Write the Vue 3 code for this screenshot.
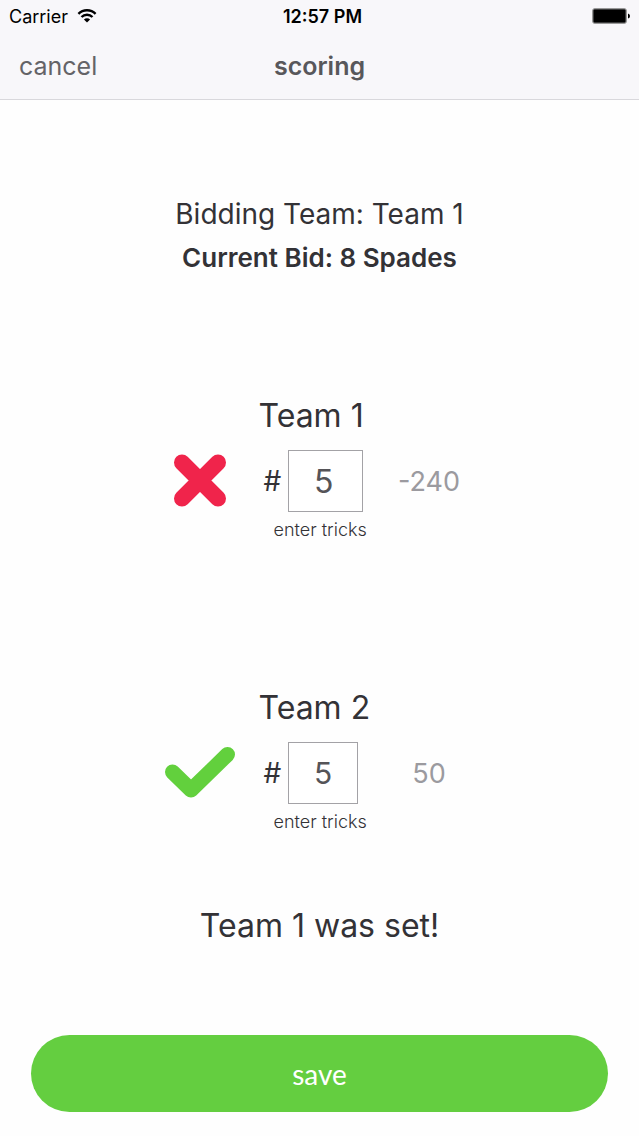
<script setup>
import { reactive } from 'vue'

const teams = reactive([
  { id: 'team1', name: 'Team 1', made: false, tricks: '5', score: '-240', wide: true },
  { id: 'team2', name: 'Team 2', made: true, tricks: '5', score: '50', wide: false }
])
</script>

<template>
  <div class="screen">
    <header class="top">
      <div class="status">
        <div class="carrier">
          <span>Carrier</span>
          <svg class="wifi" viewBox="0 0 20 14" aria-hidden="true">
            <path d="M1.4 4.8a12.2 12.2 0 0 1 17.2 0M4.5 8a7.8 7.8 0 0 1 11 0" />
            <path class="dot" d="M10 13.6 6.9 10.5a4.4 4.4 0 0 1 6.2 0z" />
          </svg>
        </div>
        <span class="time">12:57 PM</span>
        <svg class="battery" viewBox="0 0 38 16" aria-hidden="true">
          <rect x="0.5" y="0.5" width="34" height="15" rx="2.5" fill="#777" stroke="#999" />
          <rect x="1.500" y="1.500" width="32" height="13" rx="1" />
          <path d="M36 5.500q2 .5 2 2.500t-2 2.500z" />
        </svg>
      </div>
      <nav class="nav">
        <button type="button" class="cancel">cancel</button>
        <h1 class="title">scoring</h1>
      </nav>
    </header>

    <main class="content">
      <section class="bid">
        <p class="bidder">Bidding Team: Team 1</p>
        <p class="current">Current Bid: 8 Spades</p>
      </section>

      <section v-for="team in teams" :key="team.id" class="team">
        <h2 class="name">{{ team.name }}</h2>
        <svg v-if="team.made" class="mark made" viewBox="0 0 80 62" role="img" aria-label="made">
          <path d="M12.500 30 31 48 67.500 12.500" />
        </svg>
        <svg v-else class="mark missed" viewBox="0 0 80 62" role="img" aria-label="missed">
          <path d="M22 12.500 58 48.500M58 12.500 22 48.500" />
        </svg>
        <div class="entry">
          <span class="hash">#</span>
          <input
            :id="team.id"
            v-model="team.tricks"
            type="text"
            inputmode="numeric"
            class="tricks"
            :class="{ wide: team.wide }"
          />
        </div>
        <output class="score" :for="team.id">{{ team.score }}</output>
        <label class="hint" :for="team.id">enter tricks</label>
      </section>

      <p class="result">Team 1 was set!</p>
      <button type="button" class="save">save</button>
    </main>
  </div>
</template>

<style>
body {
  background: #fefefe;
}
</style>

<style scoped>
.screen {
  min-height: 100vh;
  display: flex;
  flex-direction: column;
  font-family: Inter, "Liberation Sans", sans-serif;
  color: #333236;
}
.top {
  background: #f8f7fa;
  border-bottom: 1px solid #d9d8dc;
}
.status {
  height: 32px;
  padding: 0 9px;
  display: grid;
  grid-template-columns: 1fr auto 1fr;
  align-items: center;
  font-size: 18px;
  color: #000;
}
.carrier {
  display: flex;
  align-items: center;
  gap: 9px;
}
.wifi {
  width: 20px;
  height: 14px;
  fill: none;
  stroke: #000;
  stroke-width: 2.4;
}
.wifi .dot {
  fill: #000;
  stroke: none;
}
.time {
  padding-left: 6px;
  font-weight: 600;
}
.battery {
  width: 38px;
  height: 16px;
  justify-self: end;
}
.nav {
  height: 67px;
  padding: 0 19px;
  display: grid;
  grid-template-columns: 1fr auto 1fr;
  align-items: center;
}
.cancel {
  justify-self: start;
  padding: 0;
  border: 0;
  background: none;
  font-family: inherit;
  font-size: 25px;
  color: #646367;
}
.title {
  margin: 0;
  font-size: 25px;
  font-weight: 600;
  color: #58575b;
}
.content {
  flex: 1;
  display: flex;
  flex-direction: column;
  align-items: center;
  padding: 92px 31px 24px;
}
.bid {
  margin-bottom: 114px;
  text-align: center;
  line-height: 44px;
}
.bidder,
.current,
.result {
  margin: 0;
}
.bidder {
  font-size: 28px;
}
.current {
  font-size: 26px;
  font-weight: 600;
}
.team {
  display: grid;
  grid-template-columns: 99px 120px 101px;
  align-items: center;
}
.team + .team {
  margin-top: 144px;
}
.name {
  grid-column: 2 / 4;
  margin: 0 0 12px;
  font-size: 32px;
  font-weight: 400;
  line-height: 44px;
}
.mark {
  grid-column: 1;
  width: 80px;
  height: 62px;
  fill: none;
  stroke-linecap: round;
  stroke-linejoin: round;
}
.made {
  stroke: #62d03d;
  stroke-width: 15;
}
.missed {
  stroke: #f0244b;
  stroke-width: 16;
}
.entry {
  display: flex;
  align-items: center;
  gap: 7px;
  padding-left: 5px;
}
.hash {
  font-size: 28px;
}
.tricks {
  box-sizing: border-box;
  flex: none;
  width: 70px;
  height: 62px;
  padding: 0;
  border: 1px solid #a3a2a6;
  border-radius: 0;
  background: #fff;
  font-family: inherit;
  font-size: 30px;
  text-align: center;
  color: #555458;
}
.wide {
  width: 75px;
  padding-right: 4px;
  font-size: 32px;
}
.score {
  font-size: 27px;
  text-align: center;
  color: #9b9a9f;
}
.hint {
  grid-column: 2 / 4;
  margin-top: 6px;
  padding-left: 15px;
  font-size: 18px;
  font-weight: 300;
  line-height: 24px;
}
.result {
  margin: 70px 0;
  font-size: 32px;
  line-height: 44px;
}
.save {
  align-self: stretch;
  height: 77px;
  margin-top: auto;
  border: 0;
  border-radius: 39px;
  background: #64ce40;
  font-family: Lato, sans-serif;
  font-size: 28px;
  color: #fff;
}
</style>
